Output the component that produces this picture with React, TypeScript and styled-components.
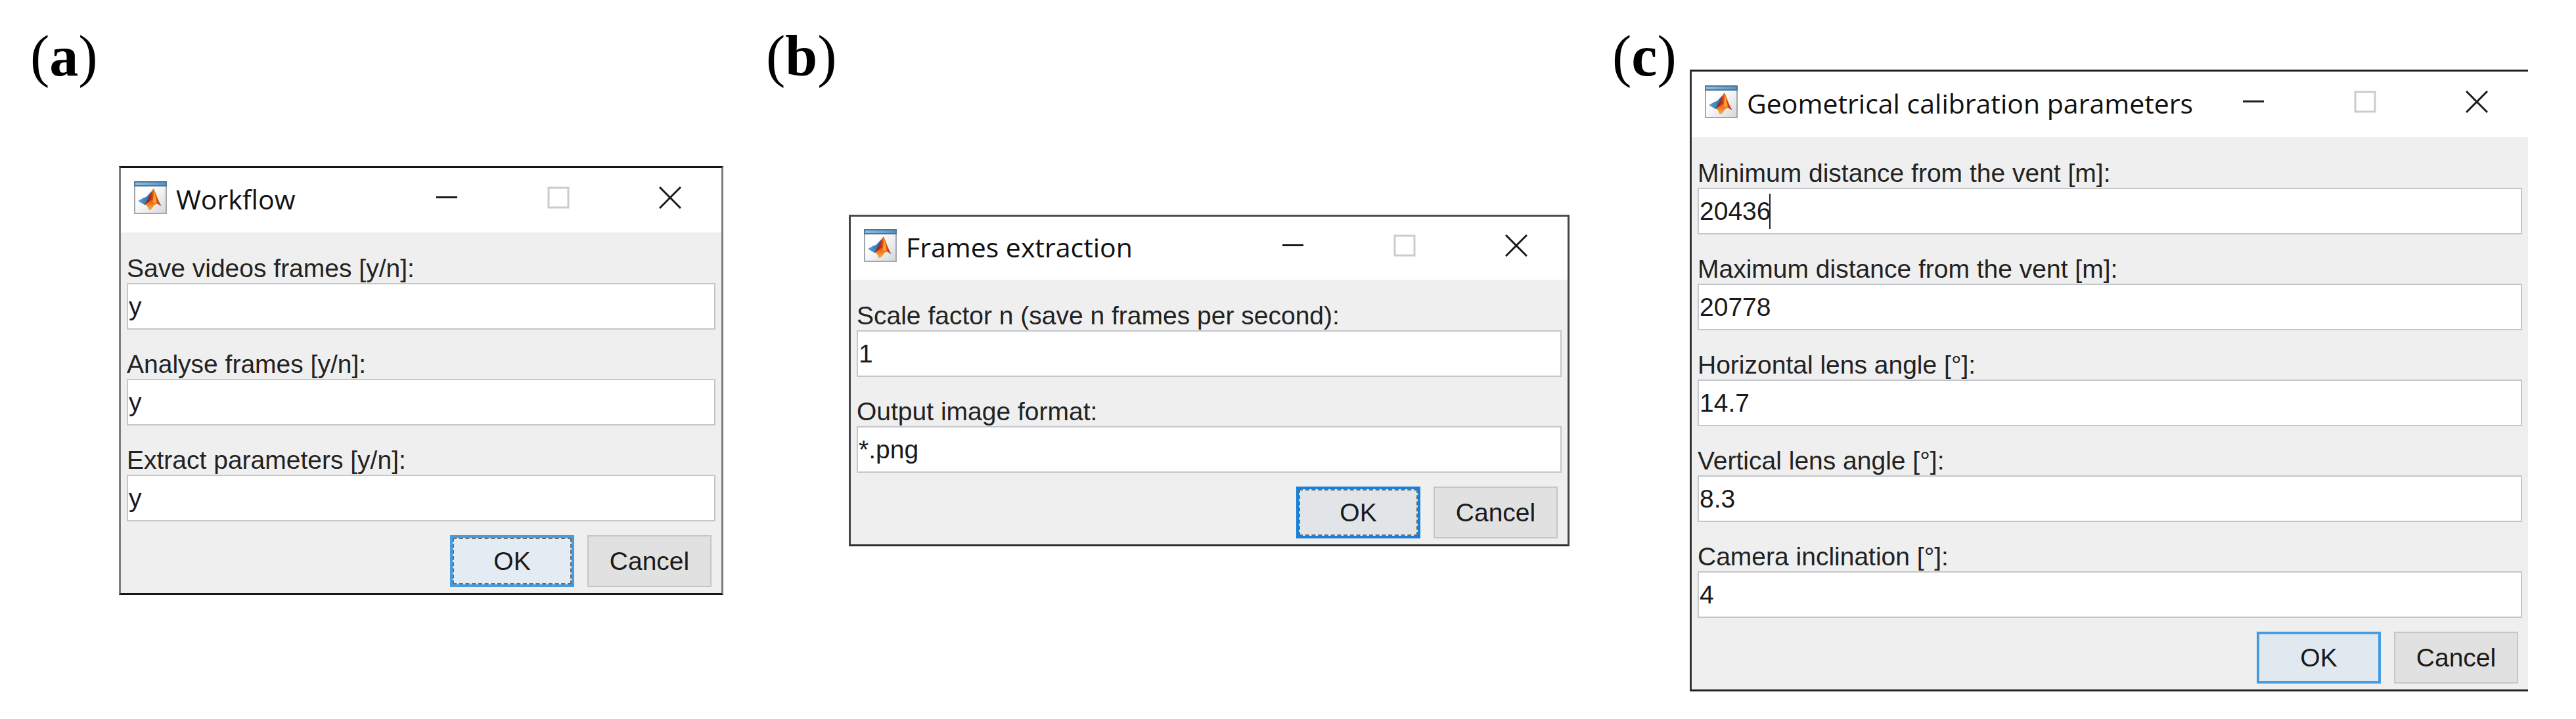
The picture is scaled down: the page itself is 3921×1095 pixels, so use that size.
import React, { useId, useState } from "react";
import styled, { createGlobalStyle } from "styled-components";

const GlobalStyle = createGlobalStyle`
  *, *::before, *::after { box-sizing: border-box; }
  body { margin: 0; background: #ffffff; }
`;

const sans = `"Liberation Sans", Arial, sans-serif`;
const ink = "#1a1a1a";

type Field = { label: string; value: string; caret?: boolean };

type DialogSpec = {
  letter: string;
  tagWidth: number;
  title: string;
  barHeight: number;
  edges: string;
  openRight?: boolean;
  fields: Field[];
  ok: { border: string; fill: string; focused: boolean };
};

const dialogs: DialogSpec[] = [
  {
    letter: "a",
    tagWidth: 135,
    title: "Workflow",
    barHeight: 98,
    edges: "#161616 #7c7c7c",
    fields: [
      { label: "Save videos frames [y/n]:", value: "y" },
      { label: "Analyse frames [y/n]:", value: "y" },
      { label: "Extract parameters [y/n]:", value: "y" },
    ],
    ok: { border: "#479be0", fill: "#e3ebf3", focused: true },
  },
  {
    letter: "b",
    tagWidth: 126,
    title: "Frames extraction",
    barHeight: 96,
    edges: "#4a4a4a #444444 #2c2c2c",
    fields: [
      { label: "Scale factor n (save n frames per second):", value: "1" },
      { label: "Output image format:", value: "*.png" },
    ],
    ok: { border: "#1a80d8", fill: "#e2e5e7", focused: true },
  },
  {
    letter: "c",
    tagWidth: 118,
    title: "Geometrical calibration parameters",
    barHeight: 100,
    edges: "#202020 #333333",
    openRight: true,
    fields: [
      { label: "Minimum distance from the vent [m]:", value: "20436", caret: true },
      { label: "Maximum distance from the vent [m]:", value: "20778" },
      { label: "Horizontal lens angle [°]:", value: "14.7" },
      { label: "Vertical lens angle [°]:", value: "8.3" },
      { label: "Camera inclination [°]:", value: "4" },
    ],
    ok: { border: "#479be0", fill: "#e1e9f0", focused: false },
  },
];

const Page = styled.main`
  display: grid;
  grid-template-columns: 1055fr 1223fr 1394fr;
  column-gap: 65px;
  padding: 34px 73px 40px 46px;
`;

const Figure = styled.figure<{ $tagWidth: number }>`
  display: grid;
  grid-template-columns: ${(p) => p.$tagWidth}px minmax(0, 1fr);
  margin: 0;
`;

const Tag = styled.figcaption`
  font: 88px/104px "Liberation Serif", "Times New Roman", serif;
  color: #000000;
  white-space: nowrap;
`;

const Window = styled.section<{ $edges: string; $openRight?: boolean }>`
  align-self: center;
  margin-top: 72px;
  border: 3px solid;
  border-color: ${(p) => p.$edges};
  border-right-width: ${(p) => (p.$openRight ? 0 : 3)}px;
  background: #efefef;
`;

const TitleBar = styled.header<{ $height: number }>`
  display: flex;
  align-items: center;
  height: ${(p) => p.$height}px;
  padding: 0 0 8px 20px;
  background: #ffffff;
`;

const Title = styled.h2`
  flex: 1;
  margin: 0 0 0 14px;
  padding-top: 4px;
  font: 400 41px/56px "Open Sans", "Segoe UI", sans-serif;
  color: #111111;
  white-space: nowrap;
`;

const Controls = styled.div`
  display: flex;
  gap: 14px;
`;

const ControlButton = styled.button`
  display: flex;
  align-items: center;
  justify-content: center;
  width: 156px;
  height: 80px;
  padding: 0;
  border: 0;
  background: transparent;
  color: ${ink};

  &:disabled { color: #cccccc; }
`;

const Form = styled.form`
  padding: 33px 9px 9px 9px;
`;

const Fields = styled.div`
  display: flex;
  flex-direction: column;
  gap: 31px;
`;

const FieldRow = styled.div`
  position: relative;
  display: flex;
  flex-direction: column;
`;

const Label = styled.label`
  font: 39px/44px ${sans};
  color: #222222;
  white-space: nowrap;
`;

const TextBox = styled.input`
  width: 100%;
  height: 71px;
  padding: 0 1px;
  border: 2px solid #c5c6cb;
  border-radius: 0;
  outline: none;
  background: #ffffff;
  font: 39px/44px ${sans};
  color: ${ink};
`;

const Caret = styled.span<{ $chars: number }>`
  position: absolute;
  bottom: 8px;
  left: calc(${(p) => p.$chars}ch + 1px);
  width: 2px;
  height: 54px;
  background: #222222;
  font: 39px/44px ${sans};
`;

const Actions = styled.div`
  display: flex;
  justify-content: flex-end;
  gap: 20px;
  margin-top: 21px;
  padding-right: 6px;
`;

const ActionButton = styled.button<{ $border?: string; $fill?: string; $focused?: boolean }>`
  width: 189px;
  height: 79px;
  padding: 0;
  border: ${(p) => (p.$border ? `4px solid ${p.$border}` : "2px solid #c6c6c6")};
  border-radius: 0;
  outline: ${(p) => (p.$focused ? "2px dashed #6b6b6b" : "none")};
  outline-offset: -6px;
  background: ${(p) => p.$fill ?? "#e1e1e1"};
  font: 39px/44px ${sans};
  color: ${ink};
`;

function MatlabIcon() {
  const id = useId();
  const url = (name: string) => `url(#${id}${name})`;
  return (
    <svg width="50" height="50" viewBox="0 0 50 50" aria-hidden="true">
      <defs>
        <linearGradient id={`${id}bg`} x1="0" y1="0" x2="1" y2="1">
          <stop offset="0.35" stopColor="#ffffff" />
          <stop offset="1" stopColor="#d4d6d9" />
        </linearGradient>
        <linearGradient id={`${id}bar`} x1="0" y1="0" x2="1" y2="0">
          <stop offset="0" stopColor="#8fbfe0" />
          <stop offset="1" stopColor="#5a93c0" />
        </linearGradient>
        <linearGradient id={`${id}blue`} x1="0" y1="0" x2="1" y2="0">
          <stop offset="0" stopColor="#55a7e0" />
          <stop offset="1" stopColor="#2b5f9a" />
        </linearGradient>
        <linearGradient id={`${id}peak`} x1="0" y1="0" x2="1" y2="0">
          <stop offset="0" stopColor="#6d1b22" />
          <stop offset="0.4" stopColor="#c92f1a" />
          <stop offset="0.6" stopColor="#f58a1f" />
          <stop offset="1" stopColor="#d9481c" />
        </linearGradient>
        <linearGradient id={`${id}foot`} x1="0" y1="0" x2="0" y2="1">
          <stop offset="0" stopColor="#e2501c" />
          <stop offset="1" stopColor="#fbb832" />
        </linearGradient>
      </defs>
      <rect x="1" y="1" width="48" height="48" fill={url("bg")} stroke="#a3a7ab" strokeWidth="2" />
      <rect x="0" y="0" width="50" height="8" fill="#48779c" />
      <rect x="2" y="2" width="46" height="4" fill={url("bar")} />
      <path d="M6 30 L15 25 C19 25 22 20 27 15 L21 33 L16 36 Z" fill={url("blue")} />
      <path d="M30 11 C26 15 24 24 16 36 C20 35 21 39 23 44 C27 43 29 37 33 35 C36 34 38 36 42 38 C37 31 34 19 30 11 Z" fill={url("peak")} />
      <path d="M16 36 C20 35 21 39 23 44 C27 43 29 37 32 35 L27 28 Z" fill={url("foot")} />
      <path d="M30 11 C31 19 30 25 28 32 L33 33 C33 25 32 17 30 11 Z" fill="#f9b52c" opacity="0.75" />
      <path d="M31 14 C34 23 37 32 42 38 L36 34 Z" fill="#b5281c" opacity="0.7" />
    </svg>
  );
}

function ControlGlyph({ d, width }: { d: string; width: number }) {
  return (
    <svg width="34" height="34" viewBox="0 0 34 34" fill="none" stroke="currentColor" strokeWidth={width} aria-hidden="true">
      <path d={d} />
    </svg>
  );
}

function FormField({ label, value, caret }: Field) {
  const id = useId();
  const [text, setText] = useState(value);
  return (
    <FieldRow>
      <Label htmlFor={id}>{label}</Label>
      <TextBox id={id} type="text" value={text} onChange={(e) => setText(e.target.value)} />
      {caret && <Caret $chars={text.length} />}
    </FieldRow>
  );
}

function Dialog({ spec }: { spec: DialogSpec }) {
  return (
    <Window $edges={spec.edges} $openRight={spec.openRight} aria-label={spec.title}>
      <TitleBar $height={spec.barHeight}>
        <MatlabIcon />
        <Title>{spec.title}</Title>
        <Controls>
          <ControlButton type="button" aria-label="Minimize">
            <ControlGlyph d="M1 16.5H33" width={3} />
          </ControlButton>
          <ControlButton type="button" aria-label="Maximize" disabled>
            <ControlGlyph d="M2 2H32V32H2Z" width={3} />
          </ControlButton>
          <ControlButton type="button" aria-label="Close">
            <ControlGlyph d="M1 1L33 33M33 1L1 33" width={3} />
          </ControlButton>
        </Controls>
      </TitleBar>
      <Form onSubmit={(e) => e.preventDefault()}>
        <Fields>
          {spec.fields.map((field) => (
            <FormField key={field.label} {...field} />
          ))}
        </Fields>
        <Actions>
          <ActionButton type="submit" $border={spec.ok.border} $fill={spec.ok.fill} $focused={spec.ok.focused}>
            OK
          </ActionButton>
          <ActionButton type="button">Cancel</ActionButton>
        </Actions>
      </Form>
    </Window>
  );
}

export default function App() {
  return (
    <>
      <GlobalStyle />
      <Page>
        {dialogs.map((spec) => (
          <Figure key={spec.letter} $tagWidth={spec.tagWidth}>
            <Tag>
              (<b>{spec.letter}</b>)
            </Tag>
            <Dialog spec={spec} />
          </Figure>
        ))}
      </Page>
    </>
  );
}
